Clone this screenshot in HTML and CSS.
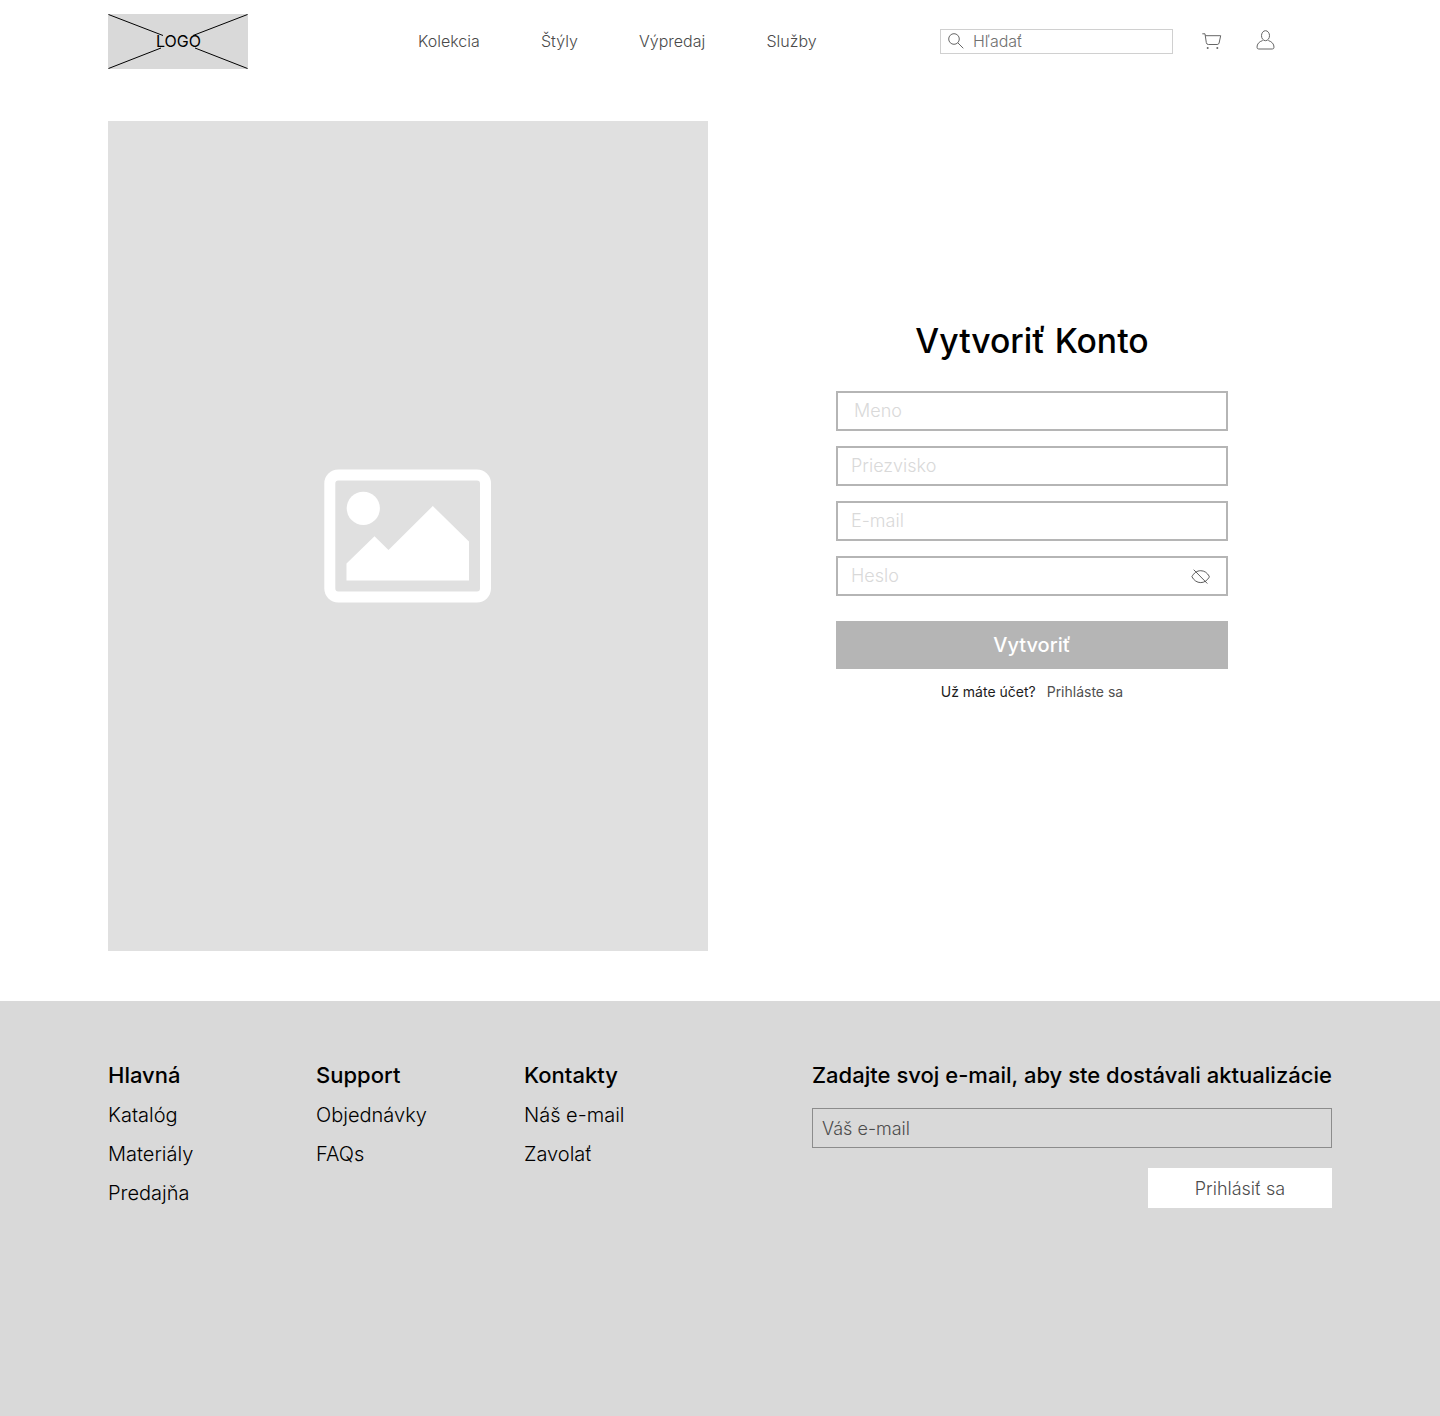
FILE: index.html
```html
<!DOCTYPE html>
<html lang="sk">
<head>
<meta charset="utf-8">
<title>Vytvoriť Konto</title>
<link rel="stylesheet" href="styles.css">
</head>
<body>
<header class="header">
  <a class="logo">
    <svg class="logo-lines" width="140" height="55" viewBox="0 0 140 55" fill="none" stroke="#000"><path d="M.5 .5 55 21.5M139.500 .5 85 21.500M.5 54.500 53 34M139.500 54.500 87 34"/></svg>
    <span class="logo-text">LOGO</span>
  </a>
  <nav class="nav">
    <a>Kolekcia</a>
    <a>Štýly</a>
    <a>Výpredaj</a>
    <a>Služby</a>
  </nav>
  <div class="search">
    <svg width="16" height="16" viewBox="0 0 16 16" fill="none" stroke="#666"><circle cx="6" cy="6" r="5.300"/><path d="M9.800 9.800 15.300 15.300"/></svg>
    <span>Hľadať</span>
  </div>
  <svg class="cart" width="20" height="17" viewBox="0 0 20 17" fill="none" stroke="#666"><path d="M.3 .8H3L4.300 9.600Q4.600 11.500 6.300 11.500H15.200Q16.700 11.500 17.100 10L18.700 2.700H3.300"/><circle cx="5.700" cy="15" r="1" fill="#666" stroke="none"/><circle cx="15.300" cy="15" r="1" fill="#666" stroke="none"/></svg>
  <svg class="user" width="20" height="20" viewBox="0 0 20 20" fill="none" stroke="#666"><ellipse cx="9.500" cy="5.700" rx="4" ry="5"/><path d="M6.700 10.500C3 11.700 1 14 1 17.200Q1 19 2.700 19H16.300Q18 19 18 17.200C18 14 16 11.700 12.300 10.500"/></svg>
</header>

<main class="main">
  <div class="picture">
    <svg width="168" height="134" viewBox="0 0 168 134"><rect x="5.800" y="6" width="155.700" height="122" rx="8.500" fill="none" stroke="#fff" stroke-width="11"/><circle cx="39.300" cy="39.300" r="16.600" fill="#fff"/><path d="M22.500 94.500 50.500 67.300 64.500 81 108.800 37 145 72.500V111.500H22.500Z" fill="#fff"/></svg>
  </div>
  <section class="signup">
    <h1 class="title">Vytvoriť Konto</h1>
    <form class="form">
      <label class="field field-name"><span>Meno</span></label>
      <label class="field"><span>Priezvisko</span></label>
      <label class="field"><span>E-mail</span></label>
      <label class="field"><span>Heslo</span>
        <svg width="20" height="16" viewBox="0 0 20 16" fill="none" stroke="#333" stroke-width=".8"><path d="M.900 7.700C2.900 3.900 5.900 1.700 9.700 1.700S16.200 3.900 18.200 7.200V8.200C16.200 11.500 13.300 13.600 9.700 13.600S2.900 11.500 .900 7.700ZM2.700 .700 16.300 14.500"/></svg>
      </label>
      <button class="create" type="button">Vytvoriť</button>
    </form>
    <p class="login"><span>Už máte účet?</span><a>Prihláste sa</a></p>
  </section>
</main>

<footer class="footer">
  <div class="column">
    <h2>Hlavná</h2>
    <a>Katalóg</a>
    <a>Materiály</a>
    <a>Predajňa</a>
  </div>
  <div class="column">
    <h2>Support</h2>
    <a>Objednávky</a>
    <a>FAQs</a>
  </div>
  <div class="column">
    <h2>Kontakty</h2>
    <a>Náš e-mail</a>
    <a>Zavolať</a>
  </div>
  <form class="newsletter">
    <h2>Zadajte svoj e-mail, aby ste dostávali aktualizácie</h2>
    <label class="email"><span>Váš e-mail</span></label>
    <button class="subscribe" type="button">Prihlásiť sa</button>
  </form>
</footer>
</body>
</html>
```
FILE: styles.css
```css
* {
  box-sizing: border-box;
}

body {
  margin: 0;
  min-height: 1416px;
  display: flex;
  flex-direction: column;
  background: #fff;
  color: #000;
  font-family: Inter, "Liberation Sans", sans-serif;
}

h1,
h2,
p {
  margin: 0;
}

svg {
  display: block;
  flex: none;
}

button {
  border: 0;
  padding: 0;
  font-family: inherit;
}

.header {
  height: 83px;
  padding-left: 108px;
  display: flex;
  align-items: center;
}

.logo {
  width: 140px;
  height: 55px;
  display: grid;
  place-items: center;
  background: #d9d9d9;
  font-size: 16px;
  line-height: 20px;
}

.logo-lines,
.logo-text {
  grid-area: 1 / 1;
}

.logo-text {
  padding: 0 0 1px 1px;
}

.nav {
  width: 522px;
  margin-left: 170px;
  padding-bottom: 2px;
  display: flex;
  gap: 61.2px;
  font-size: 16px;
  font-weight: 300;
  line-height: 20px;
  color: #4a4a4a;
}

.search {
  width: 233px;
  height: 25px;
  padding: 0 0 1px 7px;
  display: flex;
  align-items: center;
  gap: 9px;
  border: 1px solid #d0d0d0;
  font-size: 16px;
  font-weight: 300;
  line-height: 20px;
  color: #707070;
}

.search span {
  padding-bottom: 1px;
}

.cart {
  margin-left: 29px;
  margin-bottom: 1px;
}

.user {
  margin-left: 34px;
  margin-bottom: 3px;
}

.main {
  height: 918px;
  padding: 38px 212px 50px 108px;
  display: flex;
  justify-content: space-between;
}

.picture {
  width: 600px;
  height: 830px;
  display: grid;
  place-items: center;
  background: #e0e0e0;
}

.signup {
  width: 392px;
  padding-top: 196px;
}

.title {
  font-size: 33.7px;
  font-weight: 500;
  line-height: 48px;
  text-align: center;
}

.form {
  margin-top: 26px;
  display: flex;
  flex-direction: column;
  gap: 15px;
}

.field {
  height: 40px;
  padding: 0 15px 2px 13px;
  display: flex;
  align-items: center;
  justify-content: space-between;
  border: 2px solid #b5b5b5;
  font-size: 18px;
  font-weight: 300;
  color: #d9d9d9;
}

.field svg {
  margin-top: 3px;
}

.field-name {
  padding-left: 16px;
}

.create {
  height: 48px;
  margin-top: 10px;
  background: #b5b5b5;
  color: #fff;
  font-size: 20px;
  font-weight: 500;
}

.login {
  margin-top: 13px;
  display: flex;
  justify-content: center;
  gap: 11px;
  font-size: 14px;
  line-height: 20px;
  color: #1c1c1c;
}

.login a {
  color: #505050;
}

.footer {
  flex: 1;
  padding: 60px 108px;
  display: flex;
  background: #d9d9d9;
}

.footer h2 {
  font-size: 22px;
  font-weight: 500;
  line-height: 28px;
  letter-spacing: .015px;
  white-space: nowrap;
}

.column {
  width: 208px;
  display: flex;
  flex-direction: column;
  gap: 12px;
  font-size: 20px;
  font-weight: 300;
  line-height: 27px;
}

.column h2 {
  margin-bottom: 1px;
}

.newsletter {
  width: 520px;
  margin-left: auto;
  display: flex;
  flex-direction: column;
}

.email {
  height: 40px;
  margin-top: 19px;
  padding-left: 9px;
  display: flex;
  align-items: center;
  border: 1px solid #8c8c8c;
  font-size: 18px;
  font-weight: 300;
  color: #4c4c4c;
}

.subscribe {
  width: 184px;
  height: 40px;
  margin-top: 20px;
  align-self: flex-end;
  background: #fff;
  color: #4c4c4c;
  font-size: 18px;
  font-weight: 300;
}
```
